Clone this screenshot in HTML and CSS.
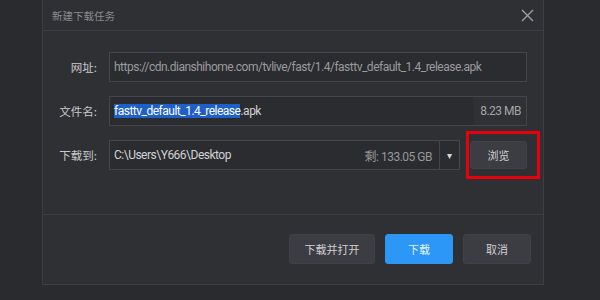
FILE: index.html
```html
<!DOCTYPE html>
<html lang="zh-CN">
<head>
    <meta charset="UTF-8">
    <title>新建下载任务</title>
    <link rel="stylesheet" href="styles.css">
</head>
<body>
    <div class="dialog">
        <div class="dialog-header">
            <span class="dialog-title">新建下载任务</span>
            <span class="close-btn">
                <svg width="13" height="13" viewBox="0 0 13 13">
                    <path d="M1 1 L12 12 M12 1 L1 12" stroke="#a2a3a7" stroke-width="1.3" fill="none"/>
                </svg>
            </span>
        </div>

        <div class="dialog-body">
            <div class="row">
                <label class="row-label">网址:</label>
                <div class="field">
                    <span class="field-text muted">https://cdn.dianshihome.com/tvlive/fast/1.4/fasttv_default_1.4_release.apk</span>
                </div>
            </div>

            <div class="row">
                <label class="row-label">文件名:</label>
                <div class="field">
                    <span class="field-text"><span class="selected">fasttv_default_1.4_release</span>.apk</span>
                    <span class="field-side">8.23 MB</span>
                </div>
            </div>

            <div class="row">
                <label class="row-label">下载到:</label>
                <div class="field path-field">
                    <span class="field-text">C:\Users\Y666\Desktop</span>
                    <span class="free-space">剩: 133.05 GB</span>
                </div>
                <div class="dropdown">&#9662;</div>
                <div class="browse-wrap">
                    <button class="btn browse-btn">浏览</button>
                    <span class="mark-box"></span>
                </div>
            </div>
        </div>

        <div class="dialog-footer">
            <button class="btn">下载并打开</button>
            <button class="btn btn-primary">下载</button>
            <button class="btn">取消</button>
        </div>
    </div>
</body>
</html>
```

FILE: styles.css
```css
body {
    margin: 0;
    background-color: #2a2b2f;
    font-family: Roboto, "Noto Sans CJK SC", sans-serif;
    height: 300px;
    overflow: hidden;
}

.dialog {
    margin-left: 42px;
    width: 502px;
    height: 285px;
    background-color: #2f3034;
    border: 1px solid #3e3f44;
    border-top: none;
    box-sizing: border-box;
    display: flex;
    flex-direction: column;
}

.dialog-header {
    height: 31px;
    border-bottom: 1px solid #3c3d42;
    box-sizing: border-box;
    display: flex;
    align-items: center;
    justify-content: space-between;
    padding: 0 9px 0 9px;
}

.dialog-title {
    font-size: 10.5px;
    color: #8b8c90;
    font-family: "Noto Sans CJK SC", sans-serif;
}

.close-btn {
    display: flex;
}

.dialog-body {
    height: 184px;
    border-bottom: 1px solid #3c3d42;
    box-sizing: border-box;
    padding: 21px 16px 0 0;
    display: flex;
    flex-direction: column;
    gap: 14px;
}

.row {
    display: flex;
    align-items: center;
    height: 30px;
}

.row-label {
    width: 54px;
    text-align: right;
    margin-right: 12px;
    font-size: 11.5px;
    color: #c9c9cb;
    font-family: "Noto Sans CJK SC", sans-serif;
}

.field {
    flex: 1;
    height: 30px;
    border: 1px solid #45464b;
    background-color: #2b2c30;
    box-sizing: border-box;
    display: flex;
    align-items: center;
    padding-left: 4px;
    font-size: 12px;
    letter-spacing: -0.5px;
    color: #d2d2d4;
    overflow: hidden;
    white-space: nowrap;
}

.field-text {
    flex: 1;
}

.muted {
    color: #9a9b9f;
}

.selected {
    background-color: #1f5fc9;
    color: #ffffff;
}

.field-side {
    align-self: stretch;
    display: flex;
    align-items: center;
    padding: 0 5px 0 6px;
    background-color: #303135;
    color: #a3a4a8;
}

.path-field {
    flex: none;
    width: 331px;
}

.free-space {
    color: #96979b;
    padding-right: 7px;
}

.dropdown {
    width: 20px;
    height: 30px;
    box-sizing: border-box;
    border: 1px solid #45464b;
    border-left: none;
    background-color: #2b2c30;
    color: #d8d8da;
    font-size: 10px;
    display: flex;
    align-items: center;
    justify-content: center;
}

.browse-wrap {
    position: relative;
    margin-left: 10px;
    display: flex;
}

.btn {
    height: 30px;
    padding: 0;
    border: 1px solid #414247;
    border-radius: 3px;
    background-color: #3c3d42;
    color: #d0d0d2;
    font-size: 11px;
    font-family: "Noto Sans CJK SC", sans-serif;
    box-sizing: border-box;
}

.browse-btn {
    width: 57px;
    height: 28px;
}

.mark-box {
    position: absolute;
    left: -4px;
    top: -10px;
    width: 74px;
    height: 48px;
    border: 3px solid #e8000b;
    box-sizing: border-box;
}

.dialog-footer {
    flex: 1;
    display: flex;
    justify-content: flex-end;
    align-items: flex-start;
    gap: 10px;
    padding: 19px 12px 0 0;
}

.dialog-footer .btn {
    width: 68px;
}

.dialog-footer .btn:first-child {
    width: 86px;
}

.btn-primary {
    background-color: #2c97f6;
    border-color: #2c97f6;
    color: #e8f3ff;
}
```
